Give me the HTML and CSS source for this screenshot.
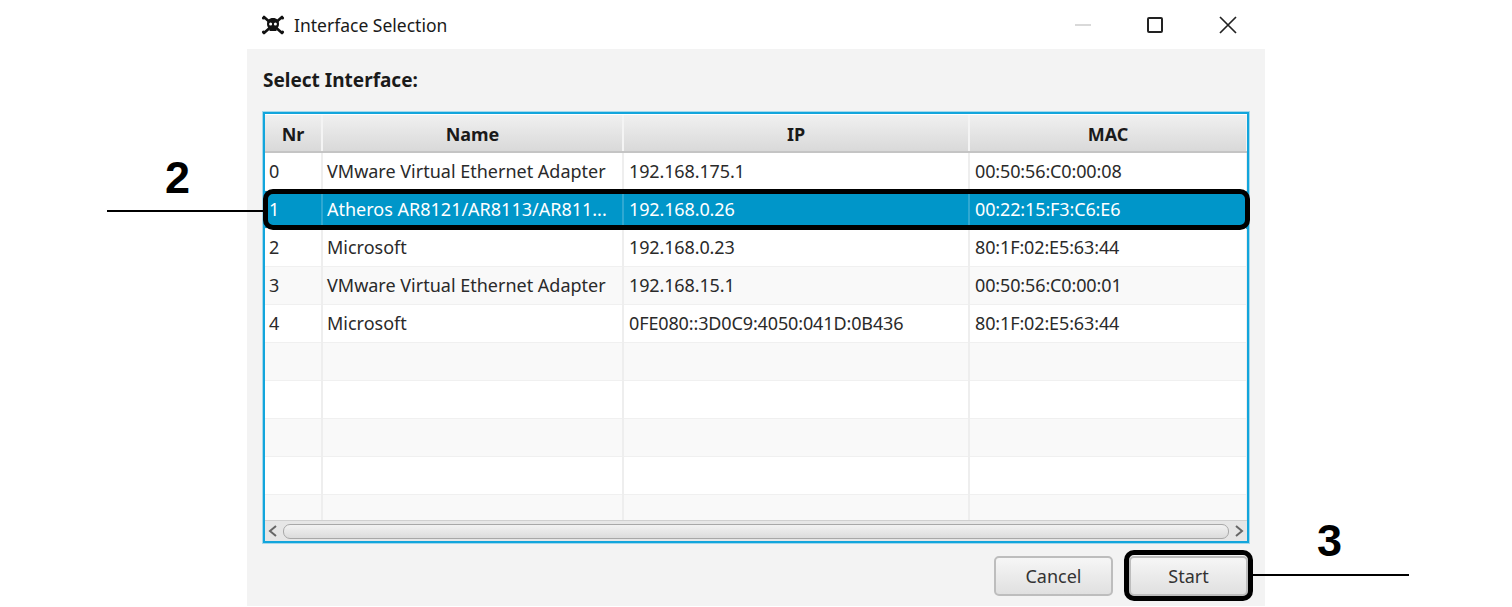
FILE: index.html
```html
<!DOCTYPE html>
<html lang="en">
<head>
    <meta charset="UTF-8">
    <link rel="stylesheet" href="styles.css">
    <title>Interface Selection</title>
</head>
<body>
    <div class="page">
        <div class="window">
            <div class="titlebar">
                <svg class="app-icon" width="24" height="22" viewBox="0 0 24 22">
                    <g stroke="#111" stroke-width="2.6" stroke-linecap="round">
                        <path d="M3 3L21 19M21 3L3 19"/>
                    </g>
                    <circle cx="2.5" cy="4" r="1.6" fill="#111"/>
                    <circle cx="21.5" cy="4" r="1.6" fill="#111"/>
                    <circle cx="2.5" cy="18" r="1.6" fill="#111"/>
                    <circle cx="21.5" cy="18" r="1.6" fill="#111"/>
                    <path d="M12 4c4 0 6 2.500 6 6 0 2.500-1.200 4-2.500 4.800V17h-7v-2.200C7.200 14 6 12.500 6 10c0-3.500 2-6 6-6z" fill="#111"/>
                    <circle cx="9.600" cy="10" r="1.500" fill="#fff"/>
                    <circle cx="14.400" cy="10" r="1.500" fill="#fff"/>
                </svg>
                <span class="title">Interface Selection</span>
                <div class="controls">
                    <svg width="16" height="16" viewBox="0 0 16 16"><path d="M0 8H16" stroke="#c4c4c4" stroke-width="1.300"/></svg>
                    <svg width="16" height="16" viewBox="0 0 16 16"><rect x="1" y="1" width="14" height="14" rx="1" fill="none" stroke="#222" stroke-width="2"/></svg>
                    <svg width="18" height="18" viewBox="0 0 18 18"><path d="M1 1L17 17M17 1L1 17" stroke="#222" stroke-width="1.700"/></svg>
                </div>
            </div>

            <div class="content">
                <h2 class="heading">Select Interface:</h2>

                <div class="table-box">
                    <div class="table-clip">
                        <table>
                            <colgroup>
                                <col class="col-nr">
                                <col class="col-name">
                                <col class="col-ip">
                                <col class="col-mac">
                            </colgroup>
                            <thead>
                                <tr><th>Nr</th><th>Name</th><th>IP</th><th>MAC</th></tr>
                            </thead>
                            <tbody>
                                <tr><td>0</td><td>VMware Virtual Ethernet Adapter</td><td>192.168.175.1</td><td>00:50:56:C0:00:08</td></tr>
                                <tr class="selected"><td>1</td><td>Atheros AR8121/AR8113/AR811...</td><td>192.168.0.26</td><td>00:22:15:F3:C6:E6</td></tr>
                                <tr><td>2</td><td>Microsoft</td><td>192.168.0.23</td><td>80:1F:02:E5:63:44</td></tr>
                                <tr class="odd"><td>3</td><td>VMware Virtual Ethernet Adapter</td><td>192.168.15.1</td><td>00:50:56:C0:00:01</td></tr>
                                <tr><td>4</td><td>Microsoft</td><td>0FE080::3D0C9:4050:041D:0B436</td><td>80:1F:02:E5:63:44</td></tr>
                                <tr class="odd"><td></td><td></td><td></td><td></td></tr>
                                <tr><td></td><td></td><td></td><td></td></tr>
                                <tr class="odd"><td></td><td></td><td></td><td></td></tr>
                                <tr><td></td><td></td><td></td><td></td></tr>
                                <tr class="odd"><td></td><td></td><td></td><td></td></tr>
                            </tbody>
                        </table>
                    </div>
                    <div class="hscroll">
                        <svg width="12" height="14" viewBox="0 0 12 14"><path d="M9 2L3 7L9 12" fill="none" stroke="#666" stroke-width="2"/></svg>
                        <div class="thumb"></div>
                        <svg width="12" height="14" viewBox="0 0 12 14"><path d="M3 2L9 7L3 12" fill="none" stroke="#666" stroke-width="2"/></svg>
                    </div>
                </div>

                <div class="buttons">
                    <button type="button" class="btn">Cancel</button>
                    <button type="button" class="btn">Start</button>
                </div>
            </div>
        </div>

        <!-- callouts drawn on top of the screenshot -->
        <div class="ring ring-row"></div>
        <div class="ring ring-btn"></div>
        <div class="leader leader-2"></div>
        <div class="leader leader-3"></div>
        <span class="num num-2">2</span>
        <span class="num num-3">3</span>
    </div>
</body>
</html>
```

FILE: styles.css
```css
html, body {
    margin: 0;
    padding: 0;
    background-color: #fff;
}

.page {
    position: relative;
    width: 1512px;
    height: 607px;
    overflow: hidden;
    font-family: "Noto Sans", "Open Sans", Arial, sans-serif;
}

.window {
    width: 1018px;
    height: 606px;
    margin-left: 247px;
    background-color: #f3f3f3;
    display: flex;
    flex-direction: column;
}

.titlebar {
    height: 49px;
    background-color: #fff;
    display: flex;
    align-items: center;
    padding-left: 14px;
    flex-shrink: 0;
}

.title {
    margin-left: 9px;
    font-size: 17.5px;
    color: #1a1a1a;
}

.controls {
    margin-left: auto;
    padding-right: 28px;
    display: flex;
    align-items: center;
    gap: 56px;
}

.content {
    flex: 1;
    padding: 0 16px;
    display: flex;
    flex-direction: column;
}

.heading {
    margin: 17px 0 18px 0;
    height: 28px;
    line-height: 28px;
    font-size: 19px;
    font-weight: bold;
    color: #1a1a1a;
}

.table-box {
    width: 986px;
    height: 431px;
    box-sizing: border-box;
    border: 2px solid #12a5dc;
    box-shadow: 0 0 0 1px rgba(18, 165, 220, 0.35);
    background-color: #fff;
    display: flex;
    flex-direction: column;
}

.table-clip {
    height: 406px;
    overflow: hidden;
    padding-top: 1px;
    box-sizing: border-box;
}

table {
    width: 982px;
    table-layout: fixed;
    border-collapse: collapse;
    font-size: 18px;
    color: #2a2a2a;
}

.col-nr { width: 57px; }
.col-name { width: 301px; }
.col-ip { width: 346px; }
.col-mac { width: 278px; }

th {
    height: 37px;
    padding: 1px 0 0 0;
    box-sizing: border-box;
    background: linear-gradient(#f0f0f0, #d9d9d9);
    border-right: 2px solid #f4f4f4;
    border-bottom: 2px solid #c4c4c4;
    font-size: 18px;
    font-weight: bold;
    text-align: center;
    color: #1a1a1a;
}

td {
    height: 38px;
    padding: 0 0 0 4px;
    box-sizing: border-box;
    border-right: 2px solid #eeeeee;
    border-bottom: 1px solid #f0f0f0;
    white-space: nowrap;
    overflow: hidden;
}

/* IP and MAC digits run a little narrower than the Noto ones */
td:nth-child(n+3) {
    padding-left: 5px;
    letter-spacing: -0.13px;
}

.odd td {
    background-color: #f9f9f9;
}

.selected td {
    background-color: #0096c9;
    color: #fff;
    border-right-color: #2fa8d2;
}

.hscroll {
    flex: 1;
    display: flex;
    align-items: center;
    gap: 4px;
    padding: 0 2px;
    background-color: #e6e6e6;
    border-top: 1px solid #d0d0d0;
}

.thumb {
    flex: 1;
    height: 13px;
    border: 1px solid #a8a8a8;
    border-radius: 7px;
    background: linear-gradient(#f2f2f2, #dcdcdc);
}

.buttons {
    margin-top: 13px;
    padding-right: 1px;
    display: flex;
    justify-content: flex-end;
    gap: 16px;
}

.btn {
    width: 119px;
    height: 40px;
    padding: 0;
    border: 2px solid #bdbdbd;
    border-radius: 5px;
    background: linear-gradient(#f6f6f6, #e0e0e0);
    font-family: inherit;
    font-size: 18px;
    color: #333;
}

.ring {
    position: absolute;
    box-sizing: border-box;
    border: 5px solid #000;
    border-radius: 10px;
}

.ring-row {
    left: 263px;
    top: 189px;
    width: 987px;
    height: 41px;
}

.ring-btn {
    left: 1124px;
    top: 550px;
    width: 129px;
    height: 51px;
}

.leader {
    position: absolute;
    height: 2px;
    background-color: #000;
}

.leader-2 {
    left: 107px;
    top: 210px;
    width: 157px;
}

.leader-3 {
    left: 1252px;
    top: 574px;
    width: 157px;
}

.num {
    position: absolute;
    font-family: "Liberation Sans", Arial, sans-serif;
    font-size: 45px;
    font-weight: bold;
    line-height: 50px;
    color: #000;
}

.num-2 {
    left: 165px;
    top: 153px;
}

.num-3 {
    left: 1317px;
    top: 516px;
}
```
